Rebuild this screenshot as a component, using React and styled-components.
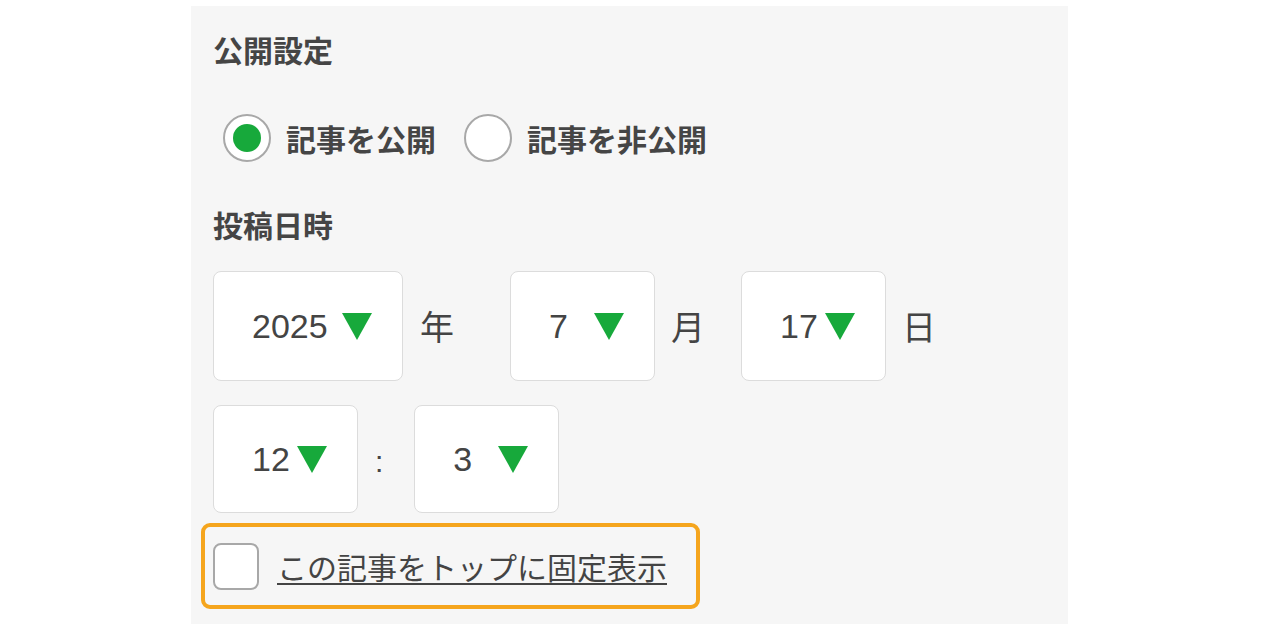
import React from "react";
import styled, { createGlobalStyle } from "styled-components";

const GlobalStyle = createGlobalStyle`
  html, body { margin: 0; padding: 0; background: #ffffff; }
  body { font-family: "Noto Sans CJK JP", "Noto Sans", sans-serif; color: #444; }
`;

const Page = styled.div`
  padding: 6px 0 0 191px;
`;

const Panel = styled.section`
  width: 877px;
  box-sizing: border-box;
  background: #f6f6f6;
  padding: 28px 22px 15px 22px;
  display: flex;
  flex-direction: column;
  align-items: flex-start;
`;

const Heading = styled.h2`
  margin: ${(p) => p.$mt || 0}px 0 0 0;
  font-size: 30px;
  line-height: 30px;
  font-weight: 700;
  color: #454545;
`;

const RadioGroup = styled.div`
  display: flex;
  align-items: center;
  margin: 50px 0 0 10px;
  gap: 28px;
`;

const RadioLabel = styled.label`
  display: flex;
  align-items: center;
  gap: 15px;
  font-size: 30px;
  line-height: 30px;
  font-weight: 700;
  color: #454545;
  cursor: pointer;
`;

const RadioCircle = styled.span`
  width: 48px;
  height: 48px;
  box-sizing: border-box;
  border-radius: 50%;
  border: 2px solid #a8a8a8;
  background: #fff;
  display: flex;
  align-items: center;
  justify-content: center;
  &::after {
    content: "";
    width: 28px;
    height: 28px;
    border-radius: 50%;
    background: ${(p) => (p.$checked ? "#17a93b" : "transparent")};
  }
`;

const SelectRow = styled.div`
  display: flex;
  align-items: center;
  margin-top: ${(p) => p.$mt}px;
`;

const SelectBox = styled.div`
  width: ${(p) => p.$w}px;
  height: ${(p) => p.$h || 110}px;
  box-sizing: border-box;
  background: #fff;
  border: 1.5px solid #dcdcdc;
  border-radius: 8px;
  padding: 0 30px 0 38px;
  display: flex;
  align-items: center;
  justify-content: space-between;
`;

const Value = styled.span`
  font-family: "Liberation Sans", Arial, sans-serif;
  font-size: 34px;
  line-height: 34px;
  color: #444;
`;

const Arrow = styled.svg`
  width: 30px;
  height: 27px;
  display: block;
  flex: none;
`;

const Unit = styled.span`
  font-size: 34px;
  line-height: 34px;
  color: #444;
  margin: 0 ${(p) => p.$after || 0}px 0 ${(p) => p.$before || 16}px;
`;

const Colon = styled.span`
  font-family: "Liberation Sans", Arial, sans-serif;
  font-size: 30px;
  line-height: 30px;
  color: #444;
  margin: 6px 31px 0 17px;
`;

const PinBox = styled.label`
  display: flex;
  align-items: center;
  box-sizing: border-box;
  height: 86px;
  margin: 10px 0 0 -12px;
  padding: 0 29px 0 8px;
  border: 4px solid #f5a51d;
  border-radius: 9px;
  cursor: pointer;
`;

const CheckSquare = styled.span`
  width: 46px;
  height: 47px;
  box-sizing: border-box;
  border: 2px solid #a8a8a8;
  border-radius: 8px;
  background: #fff;
  flex: none;
`;

const PinText = styled.span`
  margin-left: 18px;
  font-size: 30px;
  line-height: 30px;
  color: #444;
  text-decoration: underline;
  text-decoration-thickness: 2px;
  text-underline-offset: 4px;
`;

const Tri = () => (
  <Arrow viewBox="0 0 30 27">
    <polygon points="0,0 30,0 15,27" fill="#17a93b" />
  </Arrow>
);

const Select = ({ value, w, h }) => (
  <SelectBox $w={w} $h={h}>
    <Value>{value}</Value>
    <Tri />
  </SelectBox>
);

export default function App() {
  return (
    <>
      <GlobalStyle />
      <Page>
        <Panel>
          <Heading>公開設定</Heading>
          <RadioGroup>
            <RadioLabel>
              <RadioCircle $checked />
              記事を公開
            </RadioLabel>
            <RadioLabel>
              <RadioCircle />
              記事を非公開
            </RadioLabel>
          </RadioGroup>
          <Heading $mt={47}>投稿日時</Heading>
          <SelectRow $mt={32}>
            <Select value="2025" w={190} />
            <Unit $before={17} $after={56}>年</Unit>
            <Select value="7" w={145} />
            <Unit $before={16} $after={36}>月</Unit>
            <Select value="17" w={145} />
            <Unit $before={16}>日</Unit>
          </SelectRow>
          <SelectRow $mt={24}>
            <Select value="12" w={145} h={108} />
            <Colon>:</Colon>
            <Select value="3" w={145} h={108} />
          </SelectRow>
          <PinBox>
            <CheckSquare />
            <PinText>この記事をトップに固定表示</PinText>
          </PinBox>
        </Panel>
      </Page>
    </>
  );
}
